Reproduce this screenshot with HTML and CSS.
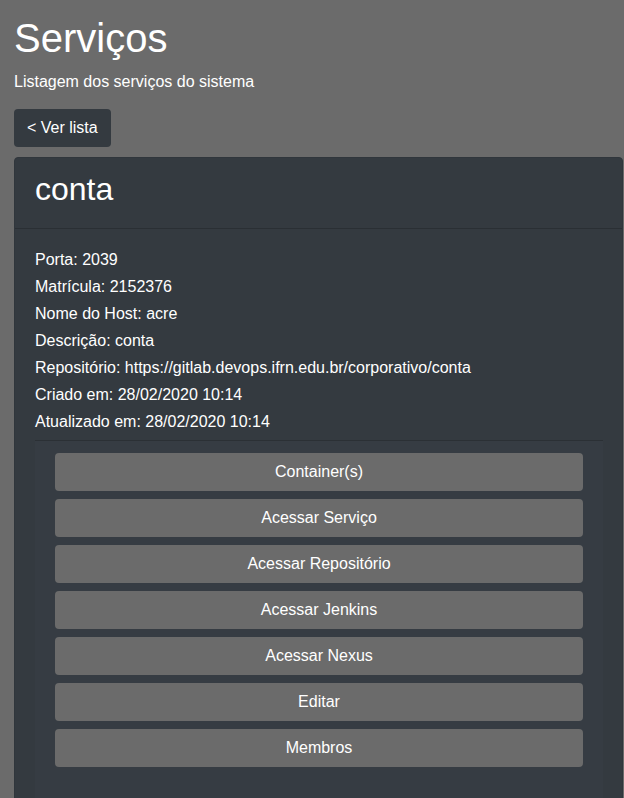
FILE: index.html
```html
<!DOCTYPE html>
<html lang="pt-BR">
<head>
<meta charset="utf-8">
<title>Serviços</title>
<link rel="stylesheet" href="styles.css">
</head>
<body>
<div class="page">
  <h1 class="title">Serviços</h1>
  <p class="lead">Listagem dos serviços do sistema</p>
  <a class="btn-back" href="#">&lt; Ver lista</a>
  <div class="card">
    <div class="card-header">
      <h2 class="card-title">conta</h2>
    </div>
    <div class="card-body">
      <div class="info">
        <div class="line">Porta: 2039</div>
        <div class="line">Matrícula: 2152376</div>
        <div class="line">Nome do Host: acre</div>
        <div class="line">Descrição: conta</div>
        <div class="line">Repositório: https://gitlab.devops.ifrn.edu.br/corporativo/conta</div>
        <div class="line">Criado em: 28/02/2020 10:14</div>
        <div class="line">Atualizado em: 28/02/2020 10:14</div>
      </div>
      <div class="actions">
        <a class="btn" href="#">Container(s)</a>
        <a class="btn" href="#">Acessar Serviço</a>
        <a class="btn" href="#">Acessar Repositório</a>
        <a class="btn" href="#">Acessar Jenkins</a>
        <a class="btn" href="#">Acessar Nexus</a>
        <a class="btn" href="#">Editar</a>
        <a class="btn" href="#">Membros</a>
      </div>
    </div>
  </div>
</div>
</body>
</html>
```
FILE: styles.css
```css
html, body {
  margin: 0;
  padding: 0;
  background: #6b6b6b;
  font-family: "Liberation Sans", Arial, sans-serif;
  color: #fff;
  height: 798px;
  overflow: hidden;
}
.page {
  padding: 14px 1px 0 14px;
}
.title {
  margin: 0 0 8px;
  font-size: 40px;
  line-height: 48px;
  font-weight: 400;
}
.lead {
  margin: 0 0 15px;
  font-size: 16px;
  line-height: 24px;
}
.btn-back {
  display: inline-block;
  background: #343a40;
  color: #fff;
  text-decoration: none;
  font-size: 16px;
  line-height: 24px;
  padding: 7px 13px;
  border-radius: 4px;
}
.card {
  margin-top: 10px;
  background: #343a40;
  border: 1px solid #30363c;
  border-radius: 4px;
}
.card-header {
  padding: 12px 20px;
  border-bottom: 1px solid #2a2f34;
}
.card-title {
  margin: 0 0 8px;
  font-size: 32px;
  line-height: 38px;
  font-weight: 400;
}
.card-body {
  padding: 17px 19px 20px 20px;
}
.line {
  font-size: 16px;
  line-height: 27px;
}
.actions {
  margin-top: 5px;
  border-top: 1px solid #2b3035;
  background: #363c43;
  padding: 12px 20px 12px;
  display: flex;
  flex-direction: column;
  gap: 8px;
  min-height: 400px;
}
.btn {
  display: block;
  background: #6b6b6b;
  color: #fff;
  text-decoration: none;
  text-align: center;
  font-size: 16px;
  line-height: 24px;
  padding: 7px 12px;
  border-radius: 4px;
}
```
